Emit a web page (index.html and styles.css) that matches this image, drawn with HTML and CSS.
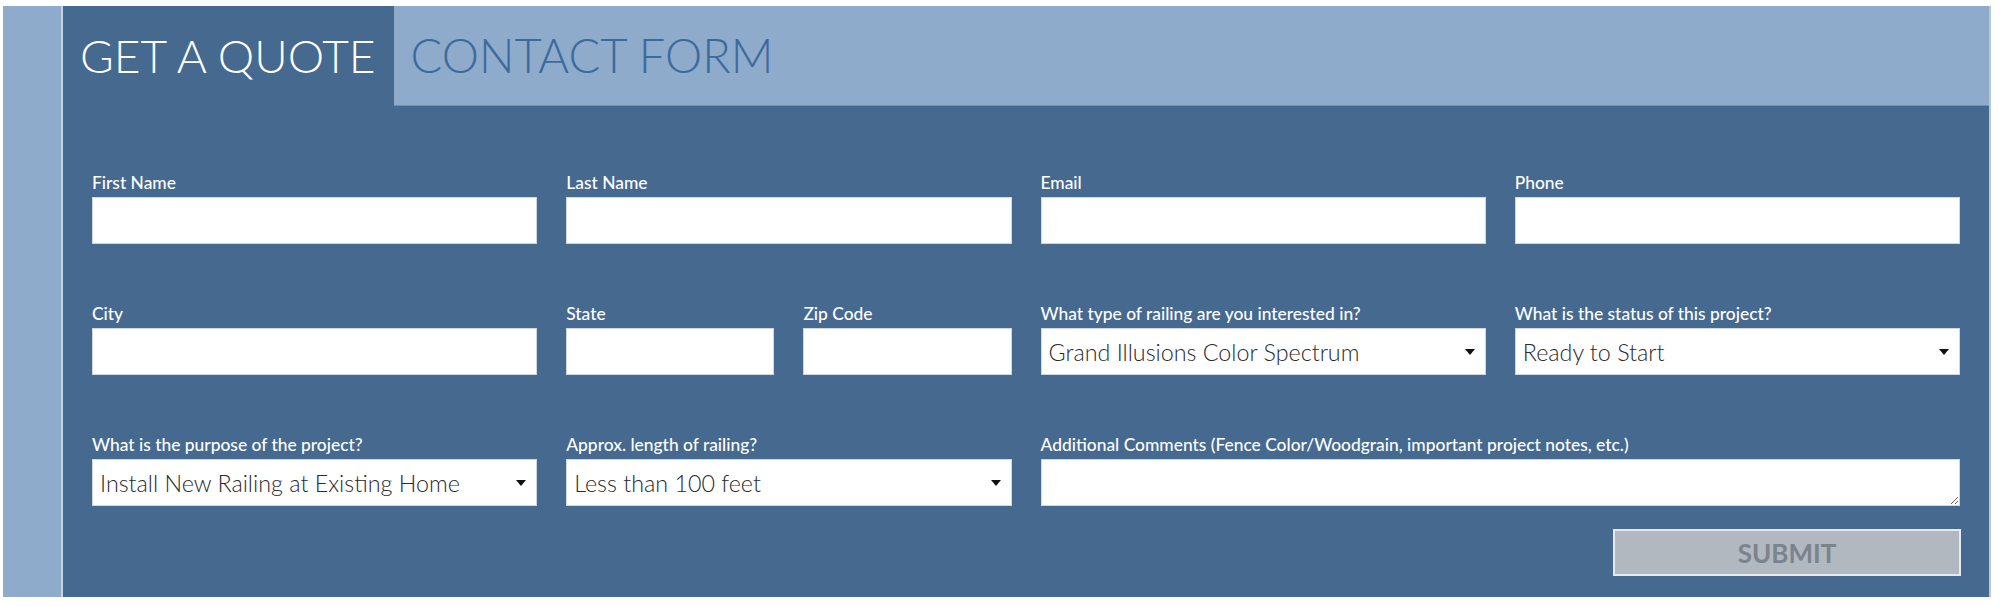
FILE: index.html
```html
<!DOCTYPE html>
<html lang="en">
<head>
<meta charset="utf-8">
<title>Get a Quote</title>
<link rel="stylesheet" href="styles.css">
</head>
<body>
<div class="frame">
  <div class="panel">
    <div class="tabs">
      <div class="tab tab-active">GET A QUOTE</div>
      <div class="tab tab-idle">CONTACT FORM</div>
    </div>
    <form class="form-body">
      <div class="grid">
        <div class="field">
          <label class="label">First Name</label>
          <input class="control" type="text">
        </div>
        <div class="field">
          <label class="label">Last Name</label>
          <input class="control" type="text">
        </div>
        <div class="field">
          <label class="label">Email</label>
          <input class="control" type="text">
        </div>
        <div class="field">
          <label class="label">Phone</label>
          <input class="control" type="text">
        </div>

        <div class="field">
          <label class="label">City</label>
          <input class="control" type="text">
        </div>
        <div class="split">
          <div class="field">
            <label class="label">State</label>
            <input class="control" type="text">
          </div>
          <div class="field">
            <label class="label">Zip Code</label>
            <input class="control" type="text">
          </div>
        </div>
        <div class="field">
          <label class="label">What type of railing are you interested in?</label>
          <div class="select-wrap">
            <select class="control select"><option>Grand Illusions Color Spectrum</option></select>
          </div>
        </div>
        <div class="field">
          <label class="label">What is the status of this project?</label>
          <div class="select-wrap">
            <select class="control select"><option>Ready to Start</option></select>
          </div>
        </div>

        <div class="field">
          <label class="label">What is the purpose of the project?</label>
          <div class="select-wrap">
            <select class="control select"><option>Install New Railing at Existing Home</option></select>
          </div>
        </div>
        <div class="field">
          <label class="label">Approx. length of railing?</label>
          <div class="select-wrap">
            <select class="control select"><option>Less than 100 feet</option></select>
          </div>
        </div>
        <div class="field field-wide">
          <label class="label">Additional Comments (Fence Color/Woodgrain, important project notes, etc.)</label>
          <textarea class="control textarea"></textarea>
        </div>
      </div>
      <div class="actions">
        <button class="submit" type="button">SUBMIT</button>
      </div>
    </form>
  </div>
</div>
</body>
</html>
```

FILE: styles.css
```css
html, body {
  margin: 0;
  padding: 0;
  background: #ffffff;
}

body {
  font-family: Lato, "Liberation Sans", sans-serif;
}

.frame {
  margin: 6px 9px 9px 3px;
  background: #8eabcb;
  padding-left: 58px;
  border-right: 2px solid #b7c8dc;
  display: flex;
}

.panel {
  flex: 1;
  border-left: 2px solid #c8d4e2;
  display: flex;
  flex-direction: column;
}

.tabs {
  display: flex;
  height: 99px;
  border-bottom: 1px solid #6f8fb3;
}

.tab {
  font-size: 47px;
  font-weight: 300;
  line-height: 99px;
  white-space: nowrap;
}

.tab-active {
  background: #45698f;
  color: #ffffff;
  margin-bottom: -1px;
  font-size: 46px;
  padding: 0 18px 0 17px;
}

.tab-idle {
  color: #3d6a9c;
  padding: 0 15px 0 17px;
}

.form-body {
  background: #45698f;
  padding: 67px 29px 21px 29px;
  margin: 0;
}

.grid {
  display: grid;
  grid-template-columns: repeat(4, 1fr);
  column-gap: 29px;
  row-gap: 60px;
}

.split {
  display: grid;
  grid-template-columns: 1fr 1fr;
  column-gap: 29px;
}

.field {
  display: flex;
  flex-direction: column;
  min-width: 0;
}

.field-wide {
  grid-column: span 2;
}

.label {
  color: #ffffff;
  font-size: 17.4px;
  font-weight: 500;
  line-height: 20px;
  margin-bottom: 4px;
  white-space: nowrap;
}

.control {
  box-sizing: border-box;
  width: 100%;
  height: 47px;
  margin: 0;
  background: #ffffff;
  border: 1px solid #cfd7e0;
  border-radius: 0;
  font-family: Lato, "Liberation Sans", sans-serif;
  font-size: 23.3px;
  font-weight: 300;
  color: #2a2a2a;
  outline: none;
}

.select-wrap {
  position: relative;
}

.select {
  appearance: none;
  -webkit-appearance: none;
  padding: 0 30px 0 7px;
}

.select-wrap::after {
  content: "";
  position: absolute;
  right: 11px;
  top: 21px;
  width: 0;
  height: 0;
  border-left: 5px solid transparent;
  border-right: 5px solid transparent;
  border-top: 6px solid #111111;
  pointer-events: none;
}

.textarea {
  resize: both;
  display: block;
  padding: 6px 7px;
}

.actions {
  display: flex;
  justify-content: flex-end;
  margin-top: 23px;
}

.submit {
  box-sizing: border-box;
  width: 348px;
  height: 47px;
  background: #b1b8c0;
  border: 2px solid #e6eaee;
  color: #7b838c;
  font-family: Lato, "Liberation Sans", sans-serif;
  font-weight: 700;
  font-size: 26px;
  padding: 0;
  margin-right: -1px;
}
```
